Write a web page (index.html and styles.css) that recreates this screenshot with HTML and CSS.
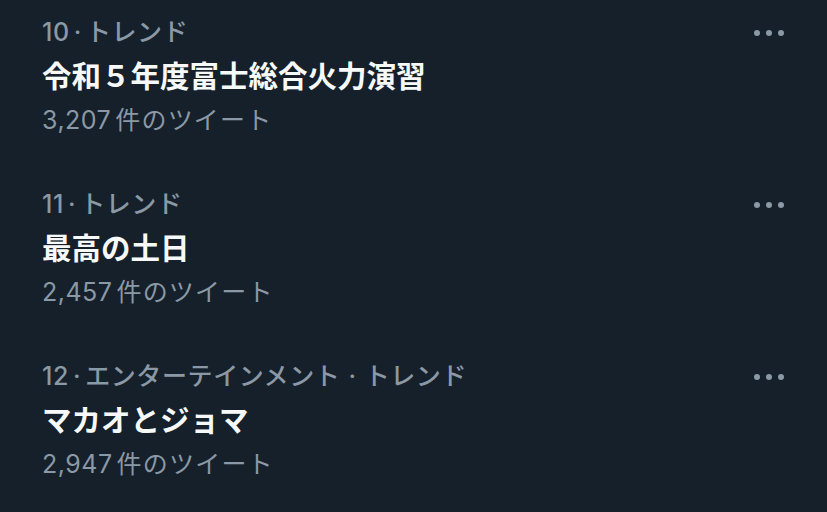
FILE: index.html
```html
<!DOCTYPE html>
<html lang="ja">
<head>
	<meta charset="UTF-8">
	<title>トレンド</title>
	<link rel="stylesheet" href="styles.css">
</head>
<body>
	<ul class="trends">
		<li class="trend">
			<div class="meta">10<span class="dot">·</span>トレンド</div>
			<div class="name">令和５年度富士総合火力演習</div>
			<div class="count">3,207<span class="unit">件のツイート</span></div>
			<div class="more"><i></i><i></i><i></i></div>
		</li>
		<li class="trend">
			<div class="meta">11<span class="dot">·</span>トレンド</div>
			<div class="name">最高の土日</div>
			<div class="count">2,457<span class="unit">件のツイート</span></div>
			<div class="more"><i></i><i></i><i></i></div>
		</li>
		<li class="trend">
			<div class="meta">12<span class="dot">·</span>エンターテインメント<span class="dot sep">·</span>トレンド</div>
			<div class="name">マカオとジョマ</div>
			<div class="count">2,947<span class="unit">件のツイート</span></div>
			<div class="more"><i></i><i></i><i></i></div>
		</li>
	</ul>
</body>
</html>
```

FILE: styles.css
```css
*{
	margin: 0;
	padding: 0;
}
body{
	background: #15202b;
	font-family: "Inter", "Noto Sans CJK JP", sans-serif;
	overflow: hidden;
}
li{
	list-style: none;
}
.trends{
	margin-top: -10px;
}
.trend{
	position: relative;
	padding: 20px 42px;
}
.meta,.name,.count{
	height: 44px;
	line-height: 44px;
	white-space: nowrap;
}
.meta{
	font-size: 25px;
	font-weight: 500;
	letter-spacing: 0.6px;
	color: #8b98a5;
}
.meta .dot{
	margin: 0 4px;
}
.meta .sep{
	margin: 0 8px;
}
.name{
	font-size: 29.5px;
	font-weight: 700;
	color: #f7f9f9;
}
.count{
	font-size: 25px;
	font-weight: 400;
	letter-spacing: 0.5px;
	color: #8b98a5;
}
.count .unit{
	margin-left: 4px;
	letter-spacing: 1.2px;
}
.more{
	position: absolute;
	top: 40px;
	right: 43px;
	display: flex;
	gap: 6px;
}
.more i{
	width: 6px;
	height: 6px;
	border-radius: 50%;
	background: #8b98a5;
}
```
